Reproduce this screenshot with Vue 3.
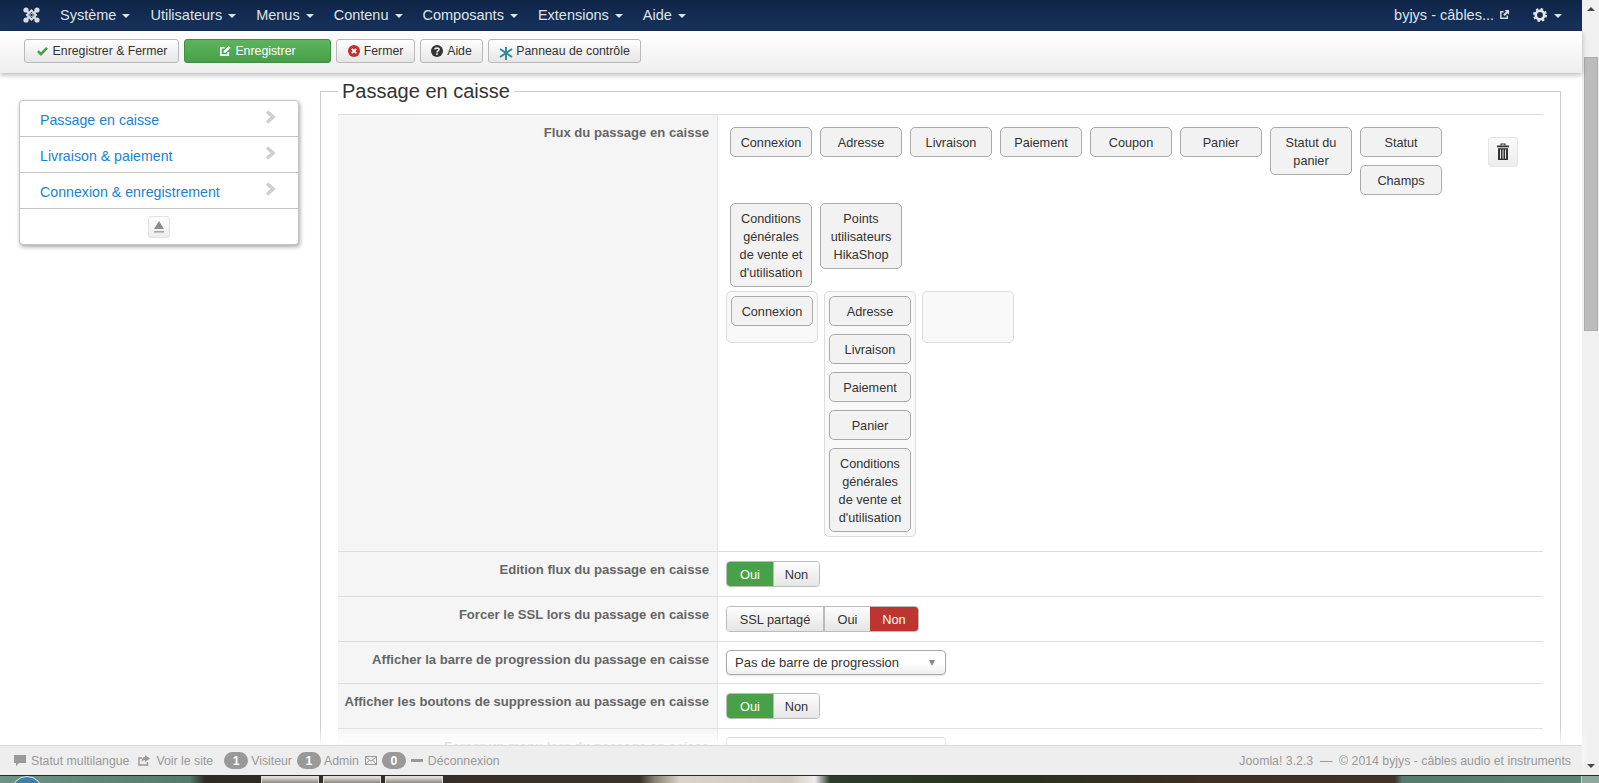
<script setup>
const menus = ['Système', 'Utilisateurs', 'Menus', 'Contenu', 'Composants', 'Extensions', 'Aide']
const sideItems = ['Passage en caisse', 'Livraison & paiement', 'Connexion & enregistrement']
const midChips = ['Adresse', 'Livraison', 'Paiement', 'Panier', 'Conditions générales de vente et d\'utilisation']
</script>

<template>
  <div class="screen">
    <div class="top">
      <div class="page">
        <header class="nav">
          <svg class="logo" viewBox="0 0 17 16" width="17" height="16">
            <g fill="#d8dde4">
              <circle cx="3" cy="3" r="2.6" />
              <circle cx="14" cy="3" r="2.6" />
              <circle cx="3" cy="13" r="2.6" />
              <circle cx="14" cy="13" r="2.6" />
            </g>
            <g fill="none" stroke="#d8dde4" stroke-width="2">
              <path d="M8.500 3.500 13 8 8.500 12.500 4 8z" />
              <path d="M3 3 6 6M14 3 11 6M3 13 6 10M14 13 11 10" />
              <path d="M6.500 8 8.500 6 10.500 8 8.500 10z" stroke-width="1" />
            </g>
          </svg>
          <nav class="menu">
            <a v-for="m in menus" :key="m" class="menu-item">{{ m }}<i class="caret"></i></a>
          </nav>
          <div class="nav-right">
            <span class="site">byjys - câbles...</span>
            <svg class="ext" viewBox="0 0 12 12" width="11" height="11">
              <path d="M9 7v3H2V3h3" fill="none" stroke="#d5dbe3" stroke-width="1.6" />
              <path d="M6 1.2h5v5L9.300 4.500 6.200 7.600 4.600 6l3.100-3.100z" fill="#d5dbe3" />
            </svg>
            <svg class="gear" viewBox="0 0 14 14" width="14" height="14">
              <circle cx="7" cy="7" r="4.200" fill="none" stroke="#e4e7eb" stroke-width="2.600" />
              <circle cx="7" cy="7" r="6" fill="none" stroke="#e4e7eb" stroke-width="2" stroke-dasharray="2.400 2.300" />
            </svg>
            <i class="caret gear-caret"></i>
          </div>
        </header>

        <div class="toolbar">
          <button class="tbtn w-close">
            <svg viewBox="0 0 14 12" width="13" height="11"><path d="M1 6.500 L3 4.500 L5.300 6.800 L11 1 L13 3 L5.300 10.800z" fill="#4a9e4a" /></svg>
            Enregistrer &amp; Fermer
          </button>
          <button class="tbtn tbtn-green w-save">
            <svg viewBox="0 0 13 13" width="12" height="12">
              <path d="M10 7.500V11H2V3h4" fill="none" stroke="#fff" stroke-width="1.800" />
              <path d="M5 6.500 10.500 1 12.500 3 7 8.500H5z" fill="#fff" />
            </svg>
            Enregistrer
          </button>
          <button class="tbtn w-fermer">
            <svg viewBox="0 0 12 12" width="12" height="12">
              <circle cx="6" cy="6" r="6" fill="#c03030" />
              <path d="M3.800 3.800 8.200 8.200M8.200 3.800 3.800 8.200" stroke="#fff" stroke-width="1.800" />
            </svg>
            Fermer
          </button>
          <button class="tbtn w-aide">
            <svg viewBox="0 0 12 12" width="12" height="12">
              <circle cx="6" cy="6" r="6" fill="#333" />
              <path d="M4 4.600C4 2.600 8 2.600 8 4.600 8 6 6 5.800 6 7.400" fill="none" stroke="#fff" stroke-width="1.500" />
              <rect x="5.200" y="8.300" width="1.600" height="1.600" fill="#fff" />
            </svg>
            Aide
          </button>
          <button class="tbtn w-panel">
            <svg class="star" viewBox="0 0 14 16" width="14" height="16">
              <g stroke="#2a8a96" stroke-width="1.900" fill="none">
                <path d="M7 2v13M1 4l12 8M13 4 1 12" />
              </g>
            </svg>
            Panneau de contrôle
          </button>
        </div>

        <main class="content">
          <aside class="side">
            <a v-for="s in sideItems" :key="s" class="side-item">
              <span>{{ s }}</span>
              <svg viewBox="0 0 11 14" width="11" height="14"><path d="M2 1.500 L8 7 L2 12.500" fill="none" stroke="#cfcfcf" stroke-width="3.600" /></svg>
            </a>
            <div class="side-foot">
              <span class="eject">
                <svg viewBox="0 0 12 14" width="12" height="14">
                  <path d="M6 1 L11 9 H1z" fill="#8c8c8c" />
                  <rect x="1" y="11" width="10" height="1.600" fill="#a5a5a5" />
                </svg>
              </span>
            </div>
          </aside>

          <fieldset class="panel">
            <legend>Passage en caisse</legend>
            <div class="row row-flow">
              <div class="label">Flux du passage en caisse</div>
              <div class="value flow-value">
                <div class="flow-top">
                  <div class="chips">
                    <span class="chip">Connexion</span>
                    <span class="chip">Adresse</span>
                    <span class="chip">Livraison</span>
                    <span class="chip">Paiement</span>
                    <span class="chip">Coupon</span>
                    <span class="chip">Panier</span>
                    <span class="chip">Statut du panier</span>
                    <div class="stack">
                      <span class="chip">Statut</span>
                      <span class="chip">Champs</span>
                    </div>
                    <span class="chip">Conditions générales de vente et d'utilisation</span>
                    <span class="chip">Points utilisateurs HikaShop</span>
                  </div>
                  <span class="trash">
                    <svg viewBox="0 0 14 18" width="14" height="18">
                      <path d="M5 2.500V1h4v1.500" fill="none" stroke="#333" stroke-width="1.200" />
                      <rect x="1" y="2.500" width="12" height="1.800" fill="#333" />
                      <path d="M2 5.200h10V17H2z" fill="#333" />
                      <path d="M4.500 6.500V15.600M7 6.500V15.600M9.500 6.500V15.600" stroke="#e8e8e8" stroke-width="1" />
                    </svg>
                  </span>
                </div>
                <div class="cols">
                  <div class="col"><span class="chip">Connexion</span></div>
                  <div class="col">
                    <span v-for="c in midChips" :key="c" class="chip">{{ c }}</span>
                  </div>
                  <div class="col"></div>
                </div>
              </div>
            </div>
            <div class="row">
              <div class="label">Edition flux du passage en caisse</div>
              <div class="value">
                <div class="toggle"><span class="opt yes">Oui</span><span class="opt">Non</span></div>
              </div>
            </div>
            <div class="row">
              <div class="label">Forcer le SSL lors du passage en caisse</div>
              <div class="value">
                <div class="toggle"><span class="opt ssl">SSL partagé</span><span class="opt">Oui</span><span class="opt no">Non</span></div>
              </div>
            </div>
            <div class="row row-select">
              <div class="label">Afficher la barre de progression du passage en caisse</div>
              <div class="value">
                <div class="select"><span>Pas de barre de progression</span><i class="select-arrow"></i></div>
              </div>
            </div>
            <div class="row">
              <div class="label">Afficher les boutons de suppression au passage en caisse</div>
              <div class="value">
                <div class="toggle"><span class="opt yes">Oui</span><span class="opt">Non</span></div>
              </div>
            </div>
            <div class="row row-select">
              <div class="label">Forcer un menu lors du passage en caisse</div>
              <div class="value">
                <div class="select"><span></span></div>
              </div>
            </div>
          </fieldset>
        </main>

        <footer class="footer">
          <div class="foot-left">
            <svg class="fi" viewBox="0 0 12 12" width="12" height="12"><path d="M0 0h12v8H5L2 11V8H0z" fill="#999" /></svg>
            <span class="ft t1">Statut multilangue</span>
            <svg class="fi" viewBox="0 0 12 11" width="12" height="11">
              <path d="M9.500 7v3H1V3h3" fill="none" stroke="#999" stroke-width="1.400" />
              <path d="M7 0l5 3.500L7 7V5C5 5 4 6 3.500 7.500 3.500 4 5 2 7 2z" fill="#999" />
            </svg>
            <span class="ft t2">Voir le site</span>
            <span class="badge b1">1</span>
            <span class="ft">Visiteur</span>
            <span class="badge b2">1</span>
            <span class="ft">Admin</span>
            <svg class="fi mail" viewBox="0 0 12 9" width="12" height="9">
              <rect x="0.500" y="0.500" width="11" height="8" fill="none" stroke="#999" />
              <path d="M0.500 1 6 5 11.500 1M0.500 8.500 4.500 4M11.500 8.500 7.500 4" fill="none" stroke="#999" />
            </svg>
            <span class="badge b3">0</span>
            <i class="dash"></i>
            <span class="ft">Déconnexion</span>
          </div>
          <div class="foot-right">Joomla! 3.2.3 &nbsp;— &nbsp;© 2014 byjys - câbles audio et instruments</div>
        </footer>
      </div>

      <div class="scrollbar">
        <i class="sb-up"></i>
        <div class="thumb"></div>
        <i class="sb-down"></i>
      </div>
    </div>

    <div class="taskbar">
      <span class="orb"></span>
      <span class="tile tile1"></span>
      <span class="tile tile2"></span>
      <span class="tile tile3"></span>
      <span class="corner"></span>
    </div>
  </div>
</template>

<style scoped>
.screen {
  width: 1599px;
  height: 783px;
  overflow: hidden;
  display: flex;
  flex-direction: column;
  font-family: "Liberation Sans", Arial, sans-serif;
  font-size: 12.300px;
  color: #333;
  background: #fff;
}
.top {
  display: flex;
  height: 775px;
}
.page {
  width: 1582px;
  display: flex;
  flex-direction: column;
  position: relative;
}

/* top bar */
.nav {
  height: 31px;
  flex: none;
  box-sizing: border-box;
  padding: 0 0 2px 23px;
  display: flex;
  align-items: center;
  background: linear-gradient(#0f2547, #17325c);
  color: #dfe4ea;
  font-size: 14.500px;
}
.logo { flex: none; margin-top: 1px; }
.menu {
  display: flex;
  margin-left: 10px;
}
.menu-item {
  padding: 0 10px;
  display: flex;
  align-items: center;
  white-space: nowrap;
}
.caret {
  width: 0;
  height: 0;
  border-left: 4px solid transparent;
  border-right: 4px solid transparent;
  border-top: 4px solid #dfe4ea;
  margin-left: 6px;
  margin-top: 2px;
}
.nav-right {
  margin-left: auto;
  display: flex;
  align-items: center;
  padding-right: 20px;
}
.ext { margin-left: 5px; }
.gear { margin-left: 23px; }
.gear-caret { margin-left: 7px; }

/* toolbar */
.toolbar {
  height: 42px;
  flex: none;
  position: relative;
  z-index: 2;
  display: flex;
  align-items: flex-start;
  gap: 5px;
  padding: 8px 0 0 24px;
  box-sizing: border-box;
  background: linear-gradient(#fff, #eee);
  box-shadow: 0 2px 5px rgba(0, 0, 0, .28);
}
.tbtn {
  height: 24px;
  padding: 0;
  display: flex;
  align-items: center;
  justify-content: center;
  gap: 4px;
  font: 12.300px "Liberation Sans", Arial, sans-serif;
  color: #333;
  border: 1px solid #b9b9b9;
  border-radius: 3px;
  background: linear-gradient(#fefefe, #e6e6e6);
  white-space: nowrap;
}
.tbtn-green {
  background: linear-gradient(#5cb55c, #489f48);
  border-color: #3f8f3f;
  color: #fff;
}
.w-close { width: 155px; }
.w-save { width: 147px; }
.w-fermer { width: 79px; }
.w-aide { width: 63px; }
.w-panel { width: 153px; }
.star { margin-top: 3px; margin-right: -1px; }

/* main area */
.content {
  flex: 1;
  min-height: 0;
  overflow: hidden;
  display: flex;
  align-items: flex-start;
}
.side {
  flex: none;
  width: 280px;
  margin: 27px 0 0 19px;
  box-sizing: border-box;
  border: 1px solid #c4c4c4;
  border-radius: 4px;
  background: #fff;
  box-shadow: 1px 2px 4px rgba(0, 0, 0, .35);
}
.side-item {
  height: 36px;
  box-sizing: border-box;
  border-bottom: 1px solid #c4c4c4;
  display: flex;
  align-items: center;
  justify-content: space-between;
  padding: 0 22px 0 20px;
  color: #1a82d0;
  font-size: 14.200px;
}
.side-item span { padding-top: 3px; }
.side-item svg { margin-bottom: 3px; }
.side-foot {
  height: 35px;
  display: flex;
  justify-content: center;
  align-items: center;
}
.eject {
  width: 20px;
  height: 20px;
  display: flex;
  align-items: center;
  justify-content: center;
  border: 1px solid #e2e2e2;
  border-radius: 3px;
  background: linear-gradient(#fff, #ececec);
}
.panel {
  flex: none;
  width: 1241px;
  box-sizing: border-box;
  margin: 5px 0 0 21px;
  padding: 10px 17px 0;
  border: 1px solid #ccc;
  min-width: 0;
}
legend {
  padding: 0 4px;
  font-size: 20px;
  line-height: 26px;
  color: #333;
}
.row {
  display: flex;
  border-top: 1px solid #dedede;
}
.label {
  flex: none;
  width: 380px;
  box-sizing: border-box;
  padding: 8px 8px 0 0;
  background: #f5f5f5;
  border-right: 1px solid #e4e4e4;
  text-align: right;
  font-size: 13.100px;
  font-weight: bold;
  line-height: 20px;
  color: #666;
}
.value {
  flex: 1;
  padding: 9px 8px;
}
.row-select .value { padding: 8px; }

/* flow */
.flow-value { padding: 0 8px 14px; }
.flow-top {
  display: flex;
  align-items: flex-start;
  padding: 12px 0 0 4px;
}
.chips {
  width: 722px;
  flex: none;
  display: flex;
  flex-wrap: wrap;
  align-items: flex-start;
  gap: 8px;
}
.stack {
  width: 82px;
  display: flex;
  flex-direction: column;
  gap: 8px;
}
.chip {
  width: 82px;
  box-sizing: border-box;
  padding: 6px 5px 4px;
  border: 1px solid #aaa;
  border-radius: 5px;
  background: #f2f2f2;
  text-align: center;
  line-height: 18px;
  font-size: 12.700px;
  color: #333;
}
.trash {
  margin: 10px 0 0 36px;
  width: 30px;
  height: 30px;
  box-sizing: border-box;
  display: flex;
  align-items: center;
  justify-content: center;
  border: 1px solid #e6e6e6;
  border-radius: 3px;
  background: linear-gradient(#fafafa, #ececec);
}
.cols {
  display: flex;
  align-items: flex-start;
  gap: 6px;
  margin-top: 4px;
}
.col {
  width: 92px;
  min-height: 52px;
  box-sizing: border-box;
  padding: 4px;
  display: flex;
  flex-direction: column;
  gap: 8px;
  border: 1px solid #ddd;
  border-radius: 5px;
  background: #f9f9f9;
}

/* toggles */
.toggle {
  display: inline-flex;
  height: 26px;
  border: 1px solid #bbb;
  border-radius: 4px;
  box-sizing: border-box;
  overflow: hidden;
  vertical-align: top;
  font-size: 12.800px;
}
.opt {
  width: 46px;
  box-sizing: border-box;
  display: flex;
  align-items: center;
  justify-content: center;
  background: linear-gradient(#fdfdfd, #e6e6e6);
  color: #333;
  border-left: 1px solid #bbb;
}
.opt:first-child { border-left: 0; }
.opt.ssl { width: 97px; border-right: 1px solid #bbb; }
.opt.yes { background: #48a148; color: #fff; border-left: 0; }
.opt.no { background: #bd352e; color: #fff; border-left: 0; width: 48px; }

/* select */
.select {
  width: 220px;
  height: 25px;
  box-sizing: border-box;
  display: flex;
  align-items: center;
  justify-content: space-between;
  padding: 0 18px 0 8px;
  border: 1px solid #aaa;
  border-radius: 4px;
  background: linear-gradient(#fff 50%, #efefef);
  box-shadow: 0 1px 2px rgba(0, 0, 0, .12);
  font-size: 13px;
}
.select-arrow {
  width: 0;
  height: 0;
  border-left: 3.500px solid transparent;
  border-right: 3.500px solid transparent;
  border-top: 6px solid #888;
  margin-right: -8px;
}

/* footer */
.footer {
  position: absolute;
  left: 0;
  right: 0;
  bottom: 0;
  height: 30px;
  box-sizing: border-box;
  display: flex;
  align-items: center;
  justify-content: space-between;
  padding: 0 11px 0 14px;
  background: #eee;
  border-top: 1px solid #d8d8d8;
  color: #999;
  box-shadow: 0 -10px 9px rgba(255, 255, 255, .85);
}
.foot-left {
  display: flex;
  align-items: center;
}
.ft { white-space: nowrap; }
.t1 { margin-left: 5px; }
.t2 { margin-left: 6px; }
.fi { flex: none; }
.t1 + .fi { margin-left: 9px; }
.badge {
  width: 24px;
  height: 17px;
  border-radius: 9px;
  background: #999;
  color: #fff;
  font-weight: bold;
  display: flex;
  align-items: center;
  justify-content: center;
  margin-right: 3px;
}
.b1 { margin-left: 11px; }
.b2 { margin-left: 5px; }
.mail { margin-left: 6px; }
.b3 { margin-left: 5px; margin-right: 5px; }
.dash {
  width: 12px;
  height: 3px;
  background: #999;
  margin-right: 5px;
}

/* scrollbar */
.scrollbar {
  width: 17px;
  flex: none;
  display: flex;
  flex-direction: column;
  align-items: center;
  background: #f0f0f0;
}
.sb-up, .sb-down {
  width: 0;
  height: 0;
  border-left: 4px solid transparent;
  border-right: 4px solid transparent;
}
.sb-up { border-bottom: 4px solid #444; margin-top: 7px; }
.sb-down { border-top: 4px solid #444; margin-top: auto; margin-bottom: 7px; }
.thumb {
  width: 14px;
  height: 274px;
  margin-top: 46px;
  box-sizing: border-box;
  background: #bcbcbc;
  border: 1px solid #aeaeae;
}

/* desktop strip */
.taskbar {
  height: 8px;
  flex: none;
  position: relative;
  border-top: 1px solid #2a2a2a;
  box-sizing: border-box;
  overflow: hidden;
  background: linear-gradient(90deg,
    #6f9384 0, #55796b 190px, #2f2a24 205px, #3a332b 640px, #8a8274 655px, #d9d3ca 680px, #cfc9c0 790px,
    #eee 815px, #2e3c2b 830px, #29321f 1000px, #3c2f24 1200px, #40332a 1395px, #547b6c 1402px, #5d8374 1582px);
}
.orb {
  position: absolute;
  left: 11px;
  top: 0;
  width: 30px;
  height: 30px;
  border-radius: 50%;
  border: 1px solid #dfe8ee;
  background: #3f7fa8;
}
.tile {
  position: absolute;
  top: 0;
  width: 58px;
  height: 7px;
  border: 1px solid #ddd;
  border-bottom: 0;
  box-sizing: border-box;
  background: linear-gradient(#e6e4de, #8a8880);
}
.tile1 { left: 261px; }
.tile2 { left: 323px; }
.tile3 { left: 385px; }
.corner {
  position: absolute;
  right: 0;
  top: 0;
  width: 17px;
  height: 7px;
  background: #8fa89e;
  border-left: 1px solid #ccd;
}
</style>
